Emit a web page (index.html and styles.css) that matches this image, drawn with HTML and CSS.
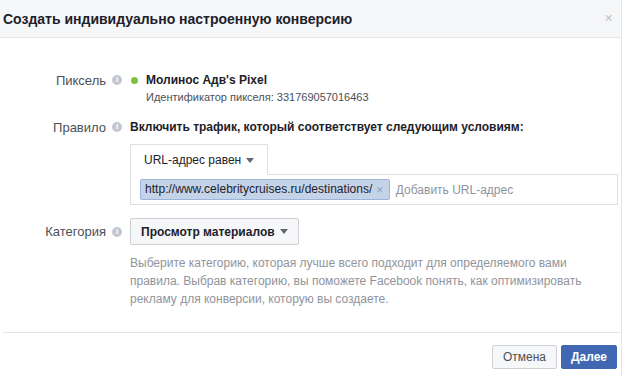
FILE: index.html
```html
<!DOCTYPE html>
<html>
<head>
    <title>Конверсия</title>
    <link rel="stylesheet" href="styles.css">
</head>
<body>
    <div class="dialog">
        <!-- Заголовок -->
        <div class="dialog-header">
            <h1>Создать индивидуально настроенную конверсию</h1>
            <span class="close">&#x2715;</span>
        </div>

        <div class="dialog-body">
            <div class="row row-pixel">
                <div class="label">Пиксель <span class="info">i</span></div>
                <div class="value">
                    <div class="pixel-name"><span class="dot"></span>Молинос Адв's Pixel</div>
                    <div class="pixel-id">Идентификатор пикселя: 331769057016463</div>
                </div>
            </div>

            <div class="row row-rule">
                <div class="label">Правило <span class="info">i</span></div>
                <div class="value">
                    <div class="rule-title">Включить трафик, который соответствует следующим условиям:</div>
                    <div class="rule-box">
                        <div class="select-tab">URL-адрес равен <span class="caret"></span></div>
                        <div class="token-input">
                            <span class="token">http://www.celebritycruises.ru/destinations/ <span class="token-x">&#x2715;</span></span>
                            <span class="placeholder">Добавить URL-адрес</span>
                        </div>
                    </div>
                </div>
            </div>

            <div class="row row-category">
                <div class="label">Категория <span class="info">i</span></div>
                <div class="value">
                    <button class="btn btn-select">Просмотр материалов <span class="caret"></span></button>
                    <p class="hint">Выберите категорию, которая лучше всего подходит для определяемого вами правила. Выбрав категорию, вы поможете Facebook понять, как оптимизировать рекламу для конверсии, которую вы создаете.</p>
                </div>
            </div>
        </div>

        <div class="dialog-footer">
            <button class="btn btn-cancel">Отмена</button>
            <button class="btn btn-primary">Далее</button>
        </div>
    </div>
</body>
</html>
```

FILE: styles.css
```css
* {
    margin: 0;
    padding: 0;
    box-sizing: border-box;
}

body {
    background: #ffffff;
    font-family: 'Liberation Sans', Arial, sans-serif;
    font-size: 12px;
    color: #4b4f56;
    width: 626px;
    height: 376px;
    overflow: hidden;
}

.dialog {
    width: 622px;
    height: 376px;
    border-right: 1px solid #e5e5e5;
}

/* Заголовок */
.dialog-header {
    height: 38px;
    background: #f6f7f9;
    border-bottom: 1px solid #e5e5e5;
    display: flex;
    align-items: center;
    justify-content: space-between;
    padding: 0 8px 0 3px;
}

.dialog-header h1 {
    font-size: 14px;
    font-weight: bold;
    color: #1d2129;
}

.close {
    color: #bec2c9;
    font-size: 11px;
}

.dialog-body {
    padding-top: 34px;
}

.row {
    display: grid;
    grid-template-columns: 122px 1fr;
    column-gap: 8px;
}

.label {
    display: flex;
    align-items: center;
    justify-content: flex-end;
    gap: 6px;
    height: 16px;
    font-size: 13px;
    color: #4b4f56;
}

.info {
    width: 10px;
    height: 10px;
    border-radius: 50%;
    background: #c4c8ce;
    color: #fff;
    font-size: 8px;
    font-weight: bold;
    line-height: 10px;
    text-align: center;
}

.value {
    padding-right: 8px;
}

/* Пиксель */
.row-pixel .value {
    padding-left: 12px;
}

.pixel-name {
    font-weight: bold;
    color: #1d2129;
    height: 16px;
    display: flex;
    align-items: center;
    gap: 8px;
    margin-left: -11px;
}

.dot {
    width: 7px;
    height: 7px;
    border-radius: 50%;
    background: #7dc243;
}

.pixel-id {
    margin-top: 3px;
    margin-left: 4px;
    color: #4b4f56;
    font-size: 11px;
}

/* Правило */
.row-rule {
    margin-top: 16px;
}

.rule-title {
    font-weight: bold;
    color: #1d2129;
    height: 16px;
    line-height: 16px;
}

.rule-box {
    margin-top: 9px;
}

.select-tab {
    display: flex;
    width: fit-content;
    align-items: center;
    gap: 5px;
    height: 31px;
    padding: 0 13px;
    border: 1px solid #dddfe2;
    border-bottom: none;
    margin-bottom: -1px;
    color: #1d2129;
    background: #fff;
    position: relative;
}

.caret {
    width: 0;
    height: 0;
    border-left: 4px solid transparent;
    border-right: 4px solid transparent;
    border-top: 5px solid #606770;
}

.token-input {
    display: flex;
    align-items: center;
    gap: 6px;
    height: 31px;
    border: 1px solid #dddfe2;
    padding: 0 9px;
    width: 488px;
}

.token {
    background: #c5d3e8;
    border: 1px solid #9cb4d8;
    border-radius: 2px;
    color: #1d2129;
    height: 21px;
    line-height: 19px;
    padding: 0 5px 0 4px;
    letter-spacing: 0.03px;
}

.token-x {
    color: #8e9fbd;
    font-size: 9px;
}

.placeholder {
    color: #90949c;
}

/* Категория */
.row-category {
    margin-top: 13px;
}

.row-category .label {
    height: 27px;
}

.btn {
    height: 24px;
    padding: 0 8px;
    border: 1px solid #ced0d4;
    border-radius: 2px;
    background: #f6f7f9;
    color: #4b4f56;
    font-family: 'Liberation Sans', Arial, sans-serif;
    font-size: 12px;
    font-weight: bold;
}

.btn-select {
    display: flex;
    align-items: center;
    gap: 5px;
    height: 27px;
    padding: 0 10px;
    color: #1d2129;
}

.hint {
    margin-top: 9px;
    color: #90949c;
    line-height: 18px;
    width: 470px;
}

/* Подвал */
.dialog-footer {
    margin-top: 24px;
    margin-left: 3px;
    border-top: 1px solid #e5e5e5;
    display: flex;
    justify-content: flex-end;
    gap: 4px;
    padding: 12px 4px 0 0;
}

.btn-cancel {
    font-weight: normal;
    padding: 0 10px;
    color: #4b4f56;
}

.btn-primary {
    background: #4267b2;
    border-color: #4267b2;
    color: #fff;
    padding: 0 9px;
}
```
